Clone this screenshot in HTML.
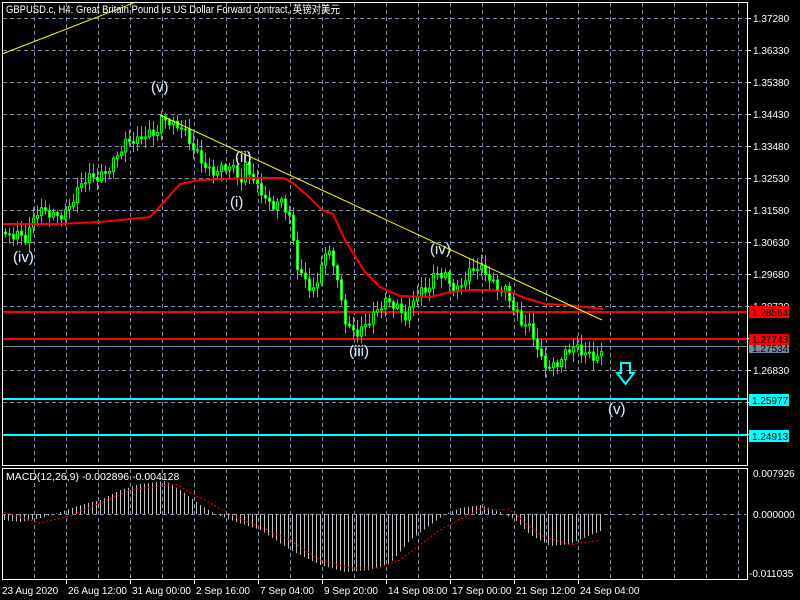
<!DOCTYPE html>
<html><head><meta charset="utf-8"><style>
html,body{margin:0;padding:0;background:#000;width:800px;height:600px;overflow:hidden}
svg{display:block;font-family:"Liberation Sans","Noto Sans CJK SC",sans-serif}
</style></head><body>
<svg id="s" width="800" height="600" xmlns="http://www.w3.org/2000/svg">
<rect width="800" height="600" fill="#000"/>
<g id="grid" stroke="#8090a8" stroke-dasharray="4,3" stroke-width="1"></g>
<rect x="2.5" y="2.5" width="745" height="463" fill="none" stroke="#fff"/>
<rect x="2.5" y="468.5" width="745" height="111" fill="none" stroke="#fff"/>
<line x1="2" y1="514.5" x2="747" y2="514.5" stroke="#8090a8" stroke-dasharray="4,3"/>
<line x1="3" y1="312" x2="747" y2="312" stroke="#f00" stroke-width="2"/>
<line x1="3" y1="339" x2="747" y2="339" stroke="#f00" stroke-width="2"/>
<line x1="3" y1="346.5" x2="747" y2="346.5" stroke="#778899"/>
<line x1="3" y1="399" x2="747" y2="399" stroke="#0ff" stroke-width="2"/>
<line x1="3" y1="435" x2="747" y2="435" stroke="#0ff" stroke-width="2"/>
<g id="candles"></g>
<g id="macd"></g>
<polyline fill="none" stroke="#f00" stroke-width="2" points="3,224 58,224 100,222 150,217 163,203 180,184 200,180 250,178 283,178 293,183 310,198 322,210 333,214 345,240 365,272 380,287 400,296 430,297 450,292 470,290 490,290 510,292 525,298 545,304 565,305 585,307 603,309"/>
<line x1="2" y1="54" x2="136" y2="2" stroke="#ff0" stroke-width="1"/>
<line x1="160" y1="115" x2="602" y2="320" stroke="#ff0" stroke-width="1"/>
<g fill="#fff" font-size="15" stroke="#68a" stroke-width="0.3">
<text x="151" y="92">(v)</text>
<text x="235" y="162">(ii)</text>
<text x="230" y="207">(i)</text>
<text x="13" y="262">(iv)</text>
<text x="349" y="356">(iii)</text>
<text x="430" y="254">(iv)</text>
<text x="608" y="414">(v)</text>
</g>
<path d="M621,363 H630 V373 H634 L625.5,384 L617,373 H621 Z" fill="none" stroke="#0ff" stroke-width="2"/>
<text x="6" y="13" fill="#fff" font-size="11" textLength="334" lengthAdjust="spacingAndGlyphs">GBPUSD.c, H4:  Great Britain Pound vs US Dollar Forward contract, 英镑对美元</text>
<text x="6" y="480" fill="#fff" font-size="10.5">MACD(12,26,9) -0.002896 -0.004128</text>
<g id="axis" fill="#fff" font-size="10"></g>
<g font-size="10">
<rect x="749" y="306" width="40" height="12" fill="#f00"/><text x="752" y="316" fill="#000">1.28564</text>
<rect x="749" y="334" width="40" height="11" fill="#f00"/><text x="752" y="343" fill="#000">1.27743</text>
<rect x="749" y="345" width="40" height="8" fill="#778899"/><text x="752" y="352" fill="#000">1.27534</text>
<rect x="749" y="394" width="40" height="12" fill="#0ff"/><text x="752" y="404" fill="#000">1.25977</text>
<rect x="749" y="430" width="40" height="12" fill="#0ff"/><text x="752" y="440" fill="#000">1.24913</text>
</g>
</svg>
<script>
(function(){
var NS="http://www.w3.org/2000/svg";
function el(p,t,a,txt){var e=document.createElementNS(NS,t);for(var k in a)e.setAttribute(k,a[k]);if(txt)e.textContent=txt;p.appendChild(e);return e;}
var g=document.getElementById('grid');
for(var x=34;x<=738;x+=32){el(g,'line',{x1:x+.5,y1:3,x2:x+.5,y2:465});el(g,'line',{x1:x+.5,y1:469,x2:x+.5,y2:579});}
for(var y=18;y<=434;y+=32){el(g,'line',{x1:3,y1:y+.5,x2:747,y2:y+.5});}
var ax=document.getElementById('axis');
var prices=["1.37280","1.36330","1.35380","1.34430","1.33480","1.32530","1.31580","1.30630","1.29680","1.28730","1.27780","1.26830","1.25880","1.24930"];
for(var i=0;i<prices.length;i++){var yy=18+32*i;el(ax,'line',{x1:747,y1:yy+.5,x2:751,y2:yy+.5,stroke:'#fff'});el(ax,'text',{x:753,y:yy+4},prices[i]);}
el(ax,'text',{x:753,y:477},"0.007926");el(ax,'text',{x:753,y:518},"0.000000");el(ax,'text',{x:749,y:577},"-0.011035");
var dates=[["23 Aug 2020",2],["26 Aug 12:00",66],["31 Aug 00:00",130],["2 Sep 16:00",194],["7 Sep 04:00",258],["9 Sep 20:00",322],["14 Sep 08:00",386],["17 Sep 00:00",450],["21 Sep 12:00",514],["24 Sep 04:00",578]];
for(var i=0;i<dates.length;i++){var d=dates[i];if(i>0)el(ax,'line',{x1:d[1]+.5,y1:579,x2:d[1]+.5,y2:584,stroke:'#fff'});el(ax,'text',{x:d[1]+(i?2:0),y:594},d[0]);}
function interp(pts,x){for(var i=0;i<pts.length-1;i++){if(x<=pts[i+1][0]){var a=pts[i],b=pts[i+1];return a[1]+(b[1]-a[1])*(x-a[0])/(b[0]-a[0]);}}return pts[pts.length-1][1];}
var P=[[4,232],[15,225],[25,240],[35,220],[50,213],[65,205],[80,190],[95,180],[105,165],[115,150],[125,145],[135,150],[145,135],[155,125],[162,108],[170,125],[180,135],[190,150],[200,155],[210,165],[220,170],[230,175],[240,185],[245,160],[250,170],[260,185],[270,210],[280,210],[288,220],[295,260],[305,275],[315,290],[320,265],[330,260],[338,295],[345,320],[355,325],[365,325],[375,320],[385,305],[395,300],[405,310],[415,295],[425,300],[435,275],[445,270],[455,285],[465,280],[475,275],[485,275],[495,280],[505,285],[512,310],[520,330],[530,335],[540,355],[550,360],[560,360],[570,355],[580,355],[590,350],[603,347]];
var c=document.getElementById('candles');
var prev=interp(P,4);
for(var x=4;x<=603;x+=4){
 var cl=interp(P,x)+Math.sin(x*1.7)*8+Math.cos(x*0.53)*4;
 var op=prev;prev=cl;
 var top=Math.min(op,cl),bot=Math.max(op,cl);
 var hi=top-2-Math.abs(Math.sin(x*2.3))*9,lo=bot+2+Math.abs(Math.cos(x*1.9))*8;
 el(c,'line',{x1:x+1.5,y1:hi,x2:x+1.5,y2:lo,stroke:'#0f0'});
 var h=Math.max(1,bot-top);
 if(cl<op) el(c,'rect',{x:x+0.5,y:top,width:2,height:h,fill:'#000',stroke:'#0f0','stroke-width':1});
 else el(c,'rect',{x:x+0.5,y:top,width:2,height:h,fill:'#fff',stroke:'#0f0','stroke-width':1});
}
var H=[[4,520],[20,522],[40,518],[60,512],[80,505],[100,500],[120,490],[140,484],[165,481],[180,490],[200,505],[215,514],[230,520],[260,530],[290,550],[320,565],[345,572],[370,570],[390,563],[410,540],[430,525],[445,514],[460,508],[480,505],[500,512],[515,520],[530,535],[550,546],[570,544],[590,535],[603,530]];
var S=[[4,512],[40,523],[70,516],[130,490],[175,484],[230,514],[290,540],[320,560],[350,568],[380,568],[400,560],[440,530],[480,509],[510,510],[540,535],[570,545],[600,540]];
var m=document.getElementById('macd');
for(var x=4;x<=603;x+=4){var v=interp(H,x);el(m,'line',{x1:x+.5,y1:514,x2:x+.5,y2:v,stroke:'#c0c0c0'});}
var pts=[];for(var x=4;x<=600;x+=2)pts.push(x+','+interp(S,x).toFixed(1));
el(m,'polyline',{points:pts.join(' '),fill:'none',stroke:'#f00','stroke-dasharray':'2,2'});
})();
</script>
</body></html>
